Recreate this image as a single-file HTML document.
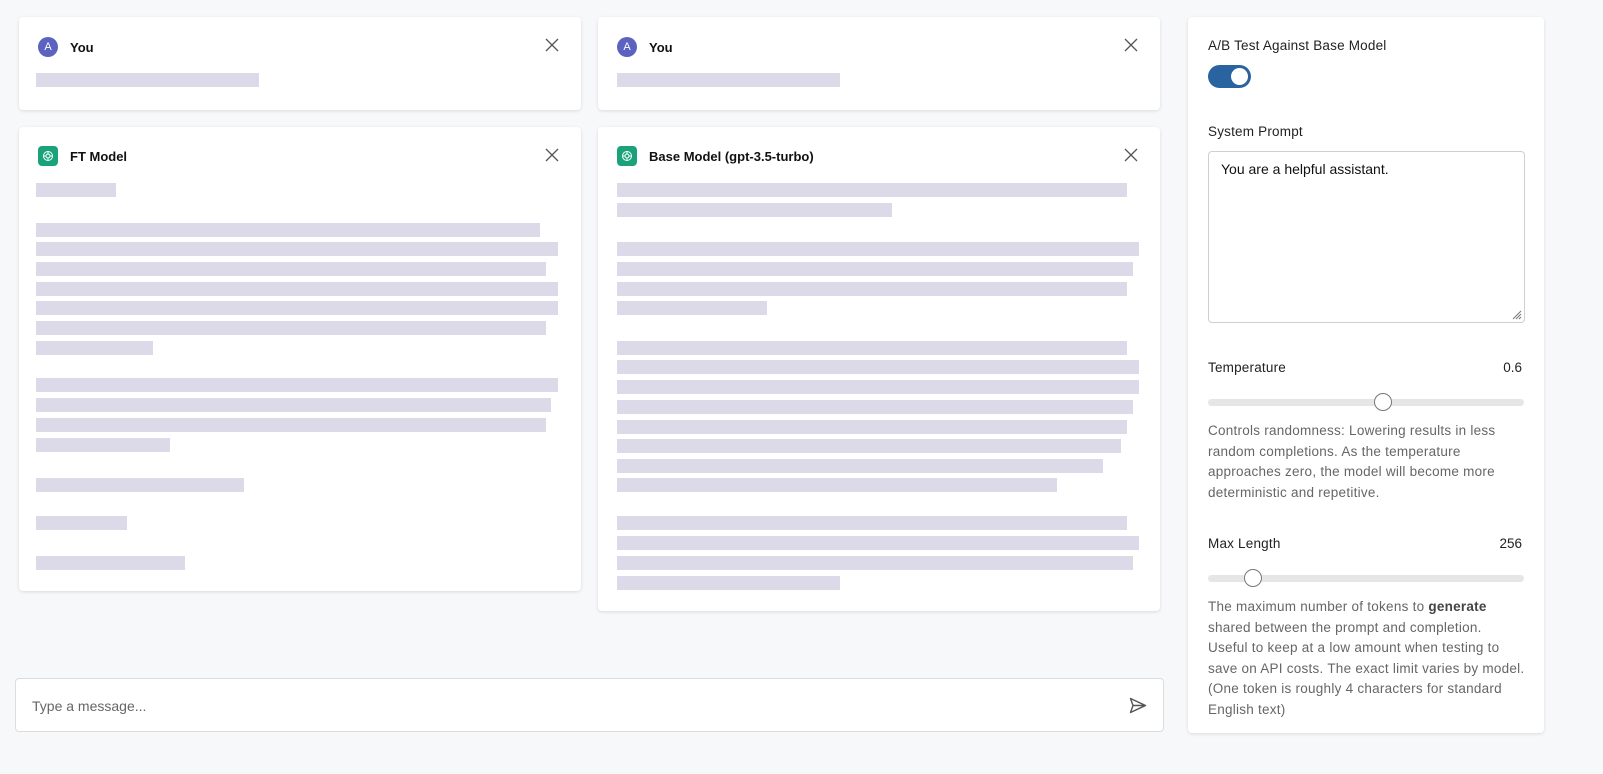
<!DOCTYPE html>
<html><head><meta charset="utf-8"><style>
*{box-sizing:border-box;margin:0;padding:0}
body{width:1603px;height:774px;background:#f7f8fa;font-family:"Liberation Sans",sans-serif;position:relative;overflow:hidden;color:#111}
.card{position:absolute;background:#fff;border-radius:4px;box-shadow:0 1px 3px rgba(0,0,0,.12)}
.b{position:absolute;height:14px;background:#dcdae8}
.hd{position:absolute;left:19px;top:20px;display:flex;align-items:center;font-weight:bold;font-size:13px}
.av{width:20px;height:20px;border-radius:50%;background:#5b62c0;color:#fff;font-size:11px;font-weight:normal;display:flex;align-items:center;justify-content:center;margin-right:12px}
.gp{width:20px;height:20px;border-radius:4px;background:#1aa37a;margin-right:12px;display:flex;align-items:center;justify-content:center}
.x{position:absolute;right:22px;top:21px}
.lbl{position:absolute;left:20px;font-size:13.5px;color:#222;letter-spacing:.2px}
.val{position:absolute;right:22px;font-size:13.5px;color:#222}
.desc{position:absolute;left:20px;white-space:nowrap;font-size:13.5px;line-height:20.5px;color:#666;letter-spacing:.25px}
.track{position:absolute;left:20px;width:316px;height:7px;border-radius:4px;background:#e6e6e6}
.thumb{position:absolute;width:18px;height:18px;border-radius:50%;background:#fff;border:1px solid #777;top:-6px}
</style></head><body>

<div class="card" style="left:19px;top:17px;width:562px;height:93px">
 <div class="hd"><div class="av">A</div>You</div>
 <svg class="x" width="14" height="14" viewBox="0 0 14 14"><path d="M1 1L13 13M13 1L1 13" stroke="#555" stroke-width="1.3"/></svg>
 <div class="b" style="left:17px;top:56px;width:223px"></div>
</div>
<div class="card" style="left:598px;top:17px;width:562px;height:93px">
 <div class="hd"><div class="av">A</div>You</div>
 <svg class="x" width="14" height="14" viewBox="0 0 14 14"><path d="M1 1L13 13M13 1L1 13" stroke="#555" stroke-width="1.3"/></svg>
 <div class="b" style="left:19px;top:56px;width:223px"></div>
</div>

<div class="card" style="left:19px;top:127px;width:562px;height:464px">
 <div class="hd" style="top:19px"><div class="gp"><svg width="12" height="12" viewBox="0 0 12 12" fill="none" stroke="#fff" stroke-width="1"><circle cx="6" cy="6" r="4.5"/><circle cx="6" cy="6" r="2"/><path d="M6 1.5V4M6 8v2.5M1.5 6H4M8 6h2.5"/></svg></div>FT Model</div>
 <svg class="x" width="14" height="14" viewBox="0 0 14 14"><path d="M1 1L13 13M13 1L1 13" stroke="#555" stroke-width="1.3"/></svg>
 <div class="b" style="left:17px;top:56px;width:80px"></div>
 <div class="b" style="left:17px;top:96px;width:504px"></div>
 <div class="b" style="left:17px;top:115px;width:522px"></div>
 <div class="b" style="left:17px;top:135px;width:510px"></div>
 <div class="b" style="left:17px;top:155px;width:522px"></div>
 <div class="b" style="left:17px;top:174px;width:522px"></div>
 <div class="b" style="left:17px;top:194px;width:510px"></div>
 <div class="b" style="left:17px;top:214px;width:117px"></div>
 <div class="b" style="left:17px;top:251px;width:522px"></div>
 <div class="b" style="left:17px;top:271px;width:515px"></div>
 <div class="b" style="left:17px;top:291px;width:510px"></div>
 <div class="b" style="left:17px;top:311px;width:134px"></div>
 <div class="b" style="left:17px;top:351px;width:208px"></div>
 <div class="b" style="left:17px;top:389px;width:91px"></div>
 <div class="b" style="left:17px;top:429px;width:149px"></div>
</div>

<div class="card" style="left:598px;top:127px;width:562px;height:484px">
 <div class="hd" style="top:19px"><div class="gp"><svg width="12" height="12" viewBox="0 0 12 12" fill="none" stroke="#fff" stroke-width="1"><circle cx="6" cy="6" r="4.5"/><circle cx="6" cy="6" r="2"/><path d="M6 1.5V4M6 8v2.5M1.5 6H4M8 6h2.5"/></svg></div>Base Model (gpt-3.5-turbo)</div>
 <svg class="x" width="14" height="14" viewBox="0 0 14 14"><path d="M1 1L13 13M13 1L1 13" stroke="#555" stroke-width="1.3"/></svg>
 <div class="b" style="left:19px;top:56px;width:510px"></div>
 <div class="b" style="left:19px;top:76px;width:275px"></div>
 <div class="b" style="left:19px;top:115px;width:522px"></div>
 <div class="b" style="left:19px;top:135px;width:516px"></div>
 <div class="b" style="left:19px;top:155px;width:510px"></div>
 <div class="b" style="left:19px;top:174px;width:150px"></div>
 <div class="b" style="left:19px;top:214px;width:510px"></div>
 <div class="b" style="left:19px;top:233px;width:522px"></div>
 <div class="b" style="left:19px;top:253px;width:522px"></div>
 <div class="b" style="left:19px;top:273px;width:516px"></div>
 <div class="b" style="left:19px;top:293px;width:510px"></div>
 <div class="b" style="left:19px;top:312px;width:504px"></div>
 <div class="b" style="left:19px;top:332px;width:486px"></div>
 <div class="b" style="left:19px;top:351px;width:440px"></div>
 <div class="b" style="left:19px;top:389px;width:510px"></div>
 <div class="b" style="left:19px;top:409px;width:522px"></div>
 <div class="b" style="left:19px;top:429px;width:516px"></div>
 <div class="b" style="left:19px;top:449px;width:223px"></div>
</div>

<div class="card" style="left:15px;top:678px;width:1149px;height:54px;border:1px solid #ddd;box-shadow:none">
 <div style="position:absolute;left:16px;top:19px;font-size:14px;color:#666">Type a message...</div>
 <svg style="position:absolute;right:16px;top:18px" width="18" height="17" viewBox="0 0 18 17" fill="none" stroke="#555" stroke-width="1.4" stroke-linejoin="round"><path d="M1.5 1.5L16.5 8.5L1.5 15.5L4 8.5Z M4 8.5H16.5"/></svg>
</div>

<div class="card" style="left:1188px;top:17px;width:356px;height:716px">
 <div class="lbl" style="top:21px">A/B Test Against Base Model</div>
 <div style="position:absolute;left:20px;top:48px;width:43px;height:23px;border-radius:12px;background:#2a64a0">
  <div style="position:absolute;right:3px;top:3px;width:17px;height:17px;border-radius:50%;background:#fff"></div>
 </div>
 <div class="lbl" style="top:107px">System Prompt</div>
 <div style="position:absolute;left:20px;top:134px;width:317px;height:172px;border:1px solid #cfcfcf;border-radius:4px;font-size:14px;padding:9px 12px;color:#111">You are a helpful assistant.
  <svg style="position:absolute;right:2px;bottom:2px" width="10" height="10" viewBox="0 0 10 10" stroke="#777"><path d="M9 1L1 9M9 4L4 9M9 7L7 9"/></svg>
 </div>
 <div class="lbl" style="top:343px">Temperature</div><div class="val" style="top:343px">0.6</div>
 <div class="track" style="top:382px"><div class="thumb" style="left:166px"></div></div>
 <div class="desc" style="top:404px">Controls randomness: Lowering results in less<br>random completions. As the temperature<br>approaches zero, the model will become more<br>deterministic and repetitive.</div>
 <div class="lbl" style="top:519px">Max Length</div><div class="val" style="top:519px">256</div>
 <div class="track" style="top:558px"><div class="thumb" style="left:36px"></div></div>
 <div class="desc" style="top:580px">The maximum number of tokens to <b style="color:#444">generate</b><br>shared between the prompt and completion.<br>Useful to keep at a low amount when testing to<br>save on API costs. The exact limit varies by model.<br>(One token is roughly 4 characters for standard<br>English text)</div>
</div>
</body></html>
